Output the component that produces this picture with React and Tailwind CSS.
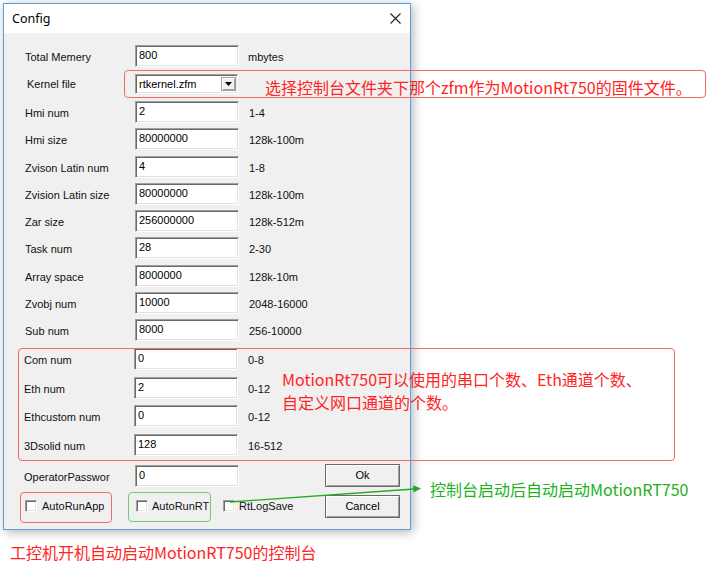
import React from "react";

const sunken = "bg-white border border-t-[#a0a0a0] border-l-[#a0a0a0] border-b-white border-r-white shadow-[inset_1px_1px_0_#696969,inset_-1px_-1px_0_#e3e3e3]";
const raised = "bg-[#f0f0f0] border border-[#6a6a6a] shadow-[inset_1px_1px_0_#ffffff,inset_-1px_-1px_0_#a0a0a0]";

const rows = [
  { label: "Hmi num", value: "2", range: "1-4", mt: "mt-[7px]", lx: "pl-0" },
  { label: "Hmi size", value: "80000000", range: "128k-100m", mt: "mt-[5px]", lx: "pl-0" },
  { label: "Zvison Latin num", value: "4", range: "1-8", mt: "mt-[6px]", lx: "pl-0" },
  { label: "Zvision Latin size", value: "80000000", range: "128k-100m", mt: "mt-[5px]", lx: "pl-0" },
  { label: "Zar size", value: "256000000", range: "128k-512m", mt: "mt-[5px]", lx: "pl-0" },
  { label: "Task num", value: "28", range: "2-30", mt: "mt-[5px]", lx: "pl-0" },
  { label: "Array space", value: "8000000", range: "128k-10m", mt: "mt-[6px]", lx: "pl-0" },
  { label: "Zvobj num", value: "10000", range: "2048-16000", mt: "mt-[5px]", lx: "pl-0" },
  { label: "Sub num", value: "8000", range: "256-10000", mt: "mt-[5px]", lx: "pl-0" },
  { label: "Com num", value: "0", range: "0-8", mt: "mt-[7px]", lx: "-ml-[1px]" },
  { label: "Eth num", value: "2", range: "0-12", mt: "mt-[7px]", lx: "-ml-[1px]" },
  { label: "Ethcustom num", value: "0", range: "0-12", mt: "mt-[6px]", lx: "-ml-[1px]" },
  { label: "3Dsolid num", value: "128", range: "16-512", mt: "mt-[7px]", lx: "-ml-[1px]" },
];

function Input({ value }) {
  return (
    <div className={`w-[104px] h-[22px] ${sunken} pl-[3px] pt-[3px] leading-[13px] text-[11px] text-black`}>
      {value}
    </div>
  );
}

function Row({ label, value, range, mt, lx }) {
  return (
    <div className={`flex items-center h-[22px] ${mt}`}>
      <div className={`w-[110px] pt-[3px] ${lx}`}>{label}</div>
      <Input value={value} />
      <div className="ml-[10px] pt-[2px]">{range}</div>
    </div>
  );
}

function Check({ label, gap }) {
  return (
    <div className="flex items-center">
      <div className={`w-[12px] h-[12px] ${sunken}`} />
      <div className={gap}>{label}</div>
    </div>
  );
}

const cjk = "font-['Noto_Sans_CJK_SC','Noto_Sans',sans-serif] text-[16px] leading-[22px]";

export default function App() {
  return (
    <div className="relative w-[720px] h-[569px] bg-white overflow-hidden font-['Liberation_Sans',Arial,sans-serif] text-[11px] text-[#111]">
      <div className="ml-[3px] mt-[3px] w-[408px] h-[527px] border border-[#5a9ee0] flex flex-col shadow-[2px_2px_10px_rgba(0,0,0,0.3)]">
        <div className="h-[29px] bg-white flex items-center justify-between pl-[8px] pr-[9px]">
          <span className="font-['Noto_Sans',sans-serif] text-[12.5px] text-black pt-[1px]">Config</span>
          <svg width="11" height="11" viewBox="0 0 11 11">
            <path d="M0.5 0.5L10.5 10.5M10.5 0.5L0.5 10.5" stroke="#222" strokeWidth="1.1" />
          </svg>
        </div>
        <div className="flex-1 bg-[#f0f0f0] pl-[21px] pt-[12px] flex flex-col">
          <div className="flex items-center h-[22px]">
            <div className="w-[110px] pt-[3px]">Total Memery</div>
            <Input value="800" />
            <div className="ml-[9px] pt-[2px]">mbytes</div>
          </div>
          <div className="flex items-center h-[20px] mt-[7px]">
            <div className="w-[110px] pt-[1px] pl-[2px]">Kernel file</div>
            <div className={`w-[103px] h-[20px] ${sunken} flex items-center justify-between pl-[3px] pr-[1px]`}>
              <span className="text-[11px] text-black">rtkernel.zfm</span>
              <div className={`w-[15px] h-[14px] ${raised} border-[#a0a0a0] flex items-center justify-center`}>
                <svg width="7" height="4" viewBox="0 0 7 4"><path d="M0 0H7L3.5 4Z" fill="#000" /></svg>
              </div>
            </div>
          </div>
          {rows.map((r) => (
            <Row key={r.label} {...r} />
          ))}
          <div className="flex items-center h-[22px] mt-[9px]">
            <div className="w-[86px] -ml-[1px] pt-[3px] overflow-hidden whitespace-nowrap">OperatorPassword</div>
            <div className="w-[25px]" />
            <Input value="0" />
            <div className={`ml-[86px] -mt-[2px] w-[75px] h-[23px] ${raised} flex items-center justify-center text-black`}>Ok</div>
          </div>
          <div className="flex items-center h-[22px] mt-[8px]">
            <div className="w-[111px]"><Check label="AutoRunApp" gap="ml-[5px]" /></div>
            <div className="w-[87px]"><Check label="AutoRunRT" gap="ml-[4px]" /></div>
            <div className="w-[102px]"><Check label="RtLogSave" gap="ml-[4px]" /></div>
            <div className={`w-[75px] h-[23px] ${raised} flex items-center justify-center text-black`}>Cancel</div>
          </div>
        </div>
      </div>

      {/* annotations */}
      <div className="absolute left-[124px] top-[70px] w-[582px] h-[28px] rounded-[4px] border-[1.5px] border-[#f26a6a]" />
      <div className={`absolute left-[265px] top-[76px] ${cjk} text-[#ff2424] whitespace-nowrap`}>
        选择控制台文件夹下那个zfm作为MotionRt750的固件文件。
      </div>

      <div className="absolute left-[18px] top-[348px] w-[657px] h-[113px] rounded-[4px] border-[1.5px] border-[#f26a6a]" />
      <div className={`absolute left-[282px] top-[368px] ${cjk} leading-[23px] text-[#ff2424] whitespace-nowrap`}>
        <div>MotionRt750可以使用的串口个数、Eth通道个数、</div>
        <div>自定义网口通道的个数。</div>
      </div>

      <div className="absolute left-[20px] top-[492px] w-[92px] h-[31px] rounded-[4px] border-[1.5px] border-[#f26a6a]" />
      <div className="absolute left-[128px] top-[492px] w-[83px] h-[30px] rounded-[4px] border-[1.5px] border-[#72cc72]" />

      <svg className="absolute left-0 top-0 pointer-events-none" width="720" height="569">
        <line x1="230" y1="502" x2="414" y2="489" stroke="#22aa22" strokeWidth="1.3" />
        <path d="M421 488.5L413 485.2L413.6 492.4Z" fill="#22aa22" />
      </svg>
      <div className={`absolute left-[430px] top-[478px] ${cjk} text-[#22b022] whitespace-nowrap`}>
        控制台启动后自动启动MotionRT750
      </div>

      <div className={`absolute left-[10px] top-[541px] ${cjk} text-[#ff2424] whitespace-nowrap`}>
        工控机开机自动启动MotionRT750的控制台
      </div>
    </div>
  );
}
